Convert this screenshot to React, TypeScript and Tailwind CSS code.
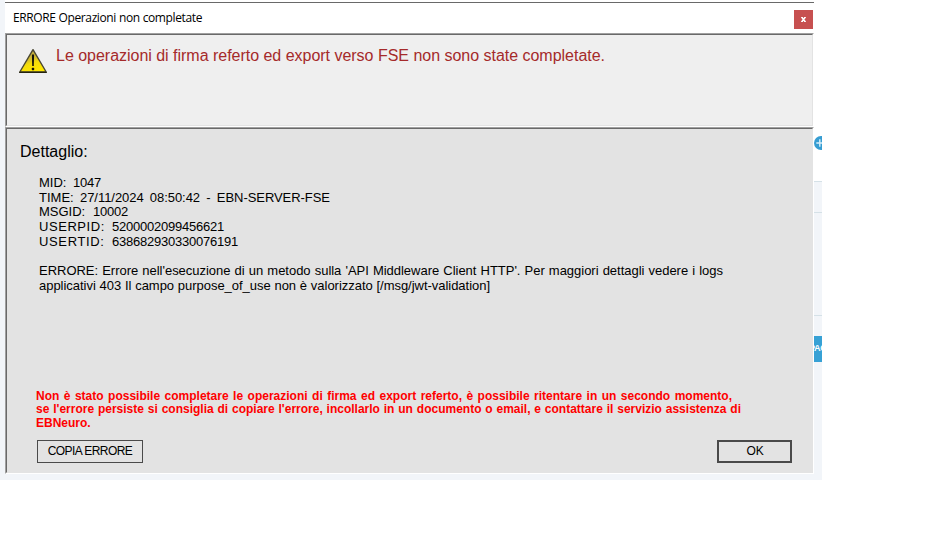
import type { ReactNode } from "react";

function Line({ className, children }: { className: string; children: ReactNode }) {
  return (
    <div className={`whitespace-nowrap [text-align-last:justify] ${className}`}>{children}</div>
  );
}

function Field({ label, value, labelClass, valueClass }: { label: string; value: string; labelClass: string; valueClass: string }) {
  return (
    <div className="flex whitespace-nowrap">
      <span className={`shrink-0 ${labelClass}`}>{label}</span>
      <span className={`shrink-0 ${valueClass}`}>{value}</span>
    </div>
  );
}

function Panel({ className, inner, children }: { className: string; inner: string; children: ReactNode }) {
  return (
    <section className={`border border-t-[#a0a0a0] border-l-[#a0a0a0] border-r-white border-b-white ${className}`}>
      <div className={`h-full border border-t-[#696969] border-l-[#696969] border-r-[#e3e3e3] border-b-[#e3e3e3] ${inner}`}>
        {children}
      </div>
    </section>
  );
}

function WarningIcon() {
  return (
    <svg className="mt-[13px] ml-[11px] h-[27px] w-[30px] shrink-0" viewBox="0 0 30 27">
      <defs>
        <linearGradient id="warn" x1="0.2" y1="0" x2="0.6" y2="1">
          <stop offset="0" stopColor="#b39f50" />
          <stop offset="0.45" stopColor="#d6bf2e" />
          <stop offset="0.6" stopColor="#f3dc0a" />
          <stop offset="1" stopColor="#ffe800" />
        </linearGradient>
      </defs>
      <path d="M15 1.7 L28.2 24 H1.8 Z" fill="url(#warn)" stroke="#4a4733" strokeWidth="1.4" strokeLinejoin="round" />
      <path d="M1.8 24.4 H28.2" stroke="#24220f" strokeWidth="1.4" strokeLinecap="round" />
      <path d="M13.9 6.5 H16.1 L15.8 18 H14.2 Z" fill="#16150a" />
      <rect x="13.8" y="19.8" width="2.4" height="2.4" rx=".6" fill="#16150a" />
    </svg>
  );
}

export default function App() {
  return (
    <div className="h-[535px] w-[940px] overflow-hidden bg-white font-['Liberation_Sans',Arial,sans-serif] text-black">
      <div className="flex h-[480px] w-[822px] bg-[#f2f5f9]">
        <main className="ml-[5px] flex h-[474px] w-[809px] shrink-0 flex-col border-t-2 border-white">
          <header className="flex h-[31px] items-start justify-between border-t border-[#696969] bg-white pr-px pl-2">
            <Line className="mt-[7px] w-[189px] font-['Open_Sans','Noto_Sans',sans-serif] text-[12px] leading-4 tracking-[-0.38px]">
              ERRORE Operazioni non completate
            </Line>
            <button className="mt-[7px] flex h-[19px] w-[19px] items-center justify-center bg-[#c75050]" aria-label="Chiudi">
              <svg className="h-[5px] w-[5px]" viewBox="0 0 5 5">
                <path d="M.8 .2 L4.2 4.8 M4.2 .2 L.8 4.8" stroke="white" strokeWidth="1.5" />
                <path d="M0 .5 H2 M3 .5 H5 M0 4.5 H2 M3 4.5 H5" stroke="white" strokeOpacity=".8" />
              </svg>
            </button>
          </header>

          <Panel className="h-[94px] shrink-0" inner="flex items-start bg-[#efefef]">
            <WarningIcon />
            <Line className="mt-[11px] ml-[8px] w-[549px] text-[16px] leading-5 tracking-[-0.02px] text-[#a52a2a]">
              Le operazioni di firma referto ed export verso FSE non sono state completate.
            </Line>
          </Panel>

          <Panel className="h-[347px] shrink-0" inner="flex flex-col bg-[#e3e3e3]">
            <h2 className="mt-[13px] ml-[13px] text-[16px] leading-5">Dettaglio:</h2>
            <div className="mt-[14px] ml-8 text-[13px] leading-[14.7px]">
              <Field label="MID:" value="1047" labelClass="w-[34px]" valueClass="tracking-[-0.23px]" />
              <Field
                label="TIME:"
                value="27/11/2024 08:50:42 - EBN-SERVER-FSE"
                labelClass="w-[41px]"
                valueClass="w-[250px] tracking-[-0.05px] [text-align-last:justify]"
              />
              <Field label="MSGID:" value="10002" labelClass="w-[54px]" valueClass="tracking-[-0.23px]" />
              <Field label="USERPID:" value="5200002099456621" labelClass="w-[73px] tracking-[0.55px]" valueClass="tracking-[-0.23px]" />
              <Field label="USERTID:" value="638682930330076191" labelClass="w-[73px] tracking-[0.65px]" valueClass="tracking-[-0.23px]" />
              <Line className="mt-[14.7px] w-[684px] tracking-[-0.02px]">
                ERRORE: Errore nell'esecuzione di un metodo sulla 'API Middleware Client HTTP'. Per maggiori dettagli vedere i logs
              </Line>
              <Line className="w-[451px] tracking-[-0.03px]">applicativi 403 Il campo purpose_of_use non è valorizzato [/msg/jwt-validation]</Line>
            </div>
            <div className="mt-auto mb-[10px] ml-[29px] text-[12px] leading-[13.5px] font-bold text-[#ff0000]">
              <Line className="w-[696px]">
                Non è stato possibile completare le operazioni di firma ed export referto, è possibile ritentare in un secondo momento,
              </Line>
              <Line className="w-[705px]">
                se l'errore persiste si consiglia di copiare l'errore, incollarlo in un documento o email, e contattare il servizio assistenza di
              </Line>
              <Line className="w-[56px]">EBNeuro.</Line>
            </div>
            <footer className="mr-[20px] mb-[9px] ml-[30px] flex justify-between text-[12px]">
              <button className="flex h-[23px] w-[106px] items-center justify-center border border-[#4a4a4a] pb-0.5 tracking-[-0.57px]">
                COPIA ERRORE
              </button>
              <button className="flex h-[23px] w-[75px] items-center justify-center border-2 border-[#4a4a4a] pb-0.5 pl-px tracking-[-0.2px]">OK</button>
            </footer>
          </Panel>
        </main>

        <aside className="flex h-[480px] w-2 flex-col overflow-hidden">
          <div className="h-[182px] shrink-0 border-b border-[#d5e1e7] bg-white pt-[136px]">
            <svg className="h-[14px] w-2" viewBox="0 0 8 14">
              <circle cx="7" cy="7" r="7" fill="#369dd2" />
              <path d="M2.3 7 H9 M5.8 3.2 V10.8" stroke="#d9f0fb" strokeWidth="1.4" />
            </svg>
          </div>
          <div className="h-[31px] shrink-0 border-b border-[#d5e1e7]" />
          <div className="h-[103px] shrink-0 border-b border-[#d5e1e7]" />
          <div className="mt-5 flex h-[26px] shrink-0 items-center justify-center overflow-hidden bg-[#37a1d5] text-[9px] font-bold tracking-[-0.3px] text-white">
            PAG
          </div>
        </aside>
      </div>
    </div>
  );
}
